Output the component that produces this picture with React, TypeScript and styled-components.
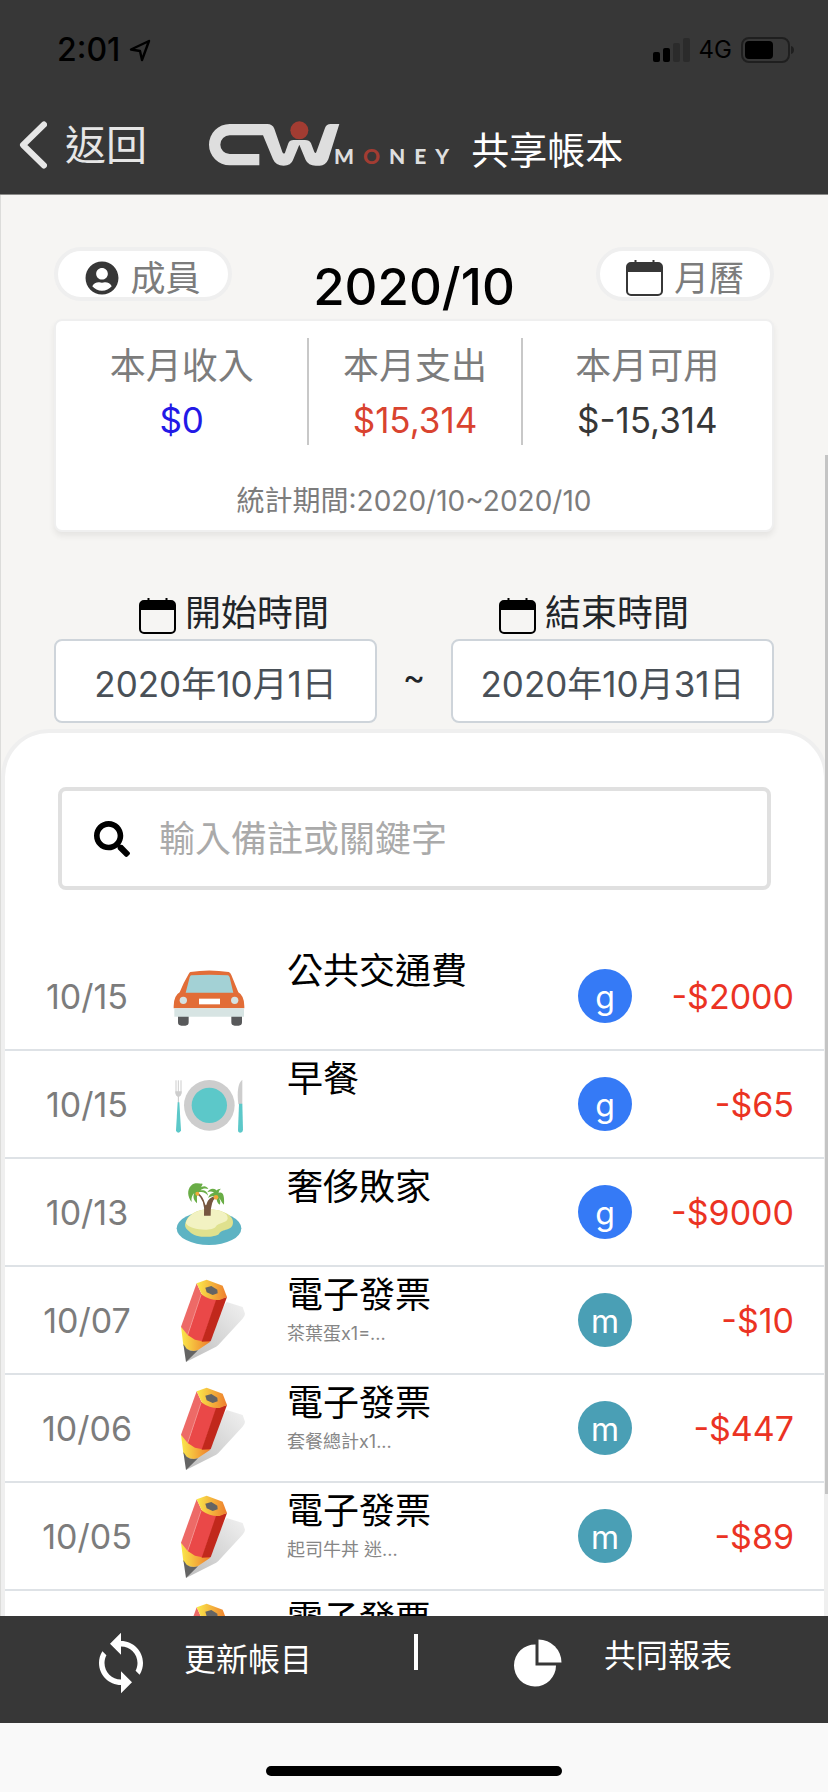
import React from "react";
import styled, { createGlobalStyle } from "styled-components";
import { FaSearch, FaUserCircle } from "react-icons/fa";
import { MdSync } from "react-icons/md";

const GlobalStyle = createGlobalStyle`
  * { box-sizing: border-box; }
  body {
    margin: 0;
    background: #f6f5f3;
    color: #212529;
    font-family: Inter, "Noto Sans CJK TC", sans-serif;
    font-size: 34px;
  }
  button, input { font: inherit; color: inherit; }
  button { border: 0; padding: 0; background: none; cursor: pointer; }
  svg { display: block; flex: none; }
`;

const Page = styled.div`
  position: relative;
  display: flex;
  flex-direction: column;
  height: 100vh;
`;

const Header = styled.header`
  flex: none;
  background: #373737;
  border-bottom: 1px solid #8a8a88;
`;

const StatusBar = styled.div`
  display: flex;
  align-items: center;
  justify-content: space-between;
  height: 92px;
  padding: 8px 33px 0 57px;
  color: #000;
`;

const StatusGroup = styled.div`
  display: flex;
  align-items: center;
  gap: 9px;
`;

const Clock = styled.span`
  font-size: 32px;
  font-weight: 500;
  line-height: 40px;
`;

const Network = styled.span`
  font-size: 24px;
  line-height: 40px;
`;

const NavBar = styled.div`
  display: flex;
  align-items: center;
  height: 102px;
  padding-left: 18px;
`;

const BackButton = styled.button`
  display: flex;
  align-items: center;
  gap: 18px;
  margin-right: 62px;
  padding-top: 3px;
  color: #e6e6e6;
  font-size: 41px;
  line-height: 48px;
`;

const Brand = styled.div`
  display: flex;
  align-items: flex-end;
  color: #dedede;
`;

const Wordmark = styled.span`
  display: flex;
  gap: 9px;
  margin-left: -6px;
  font-family: Lato, sans-serif;
  font-size: 21px;
  font-weight: 900;
  line-height: 21px;
`;

const RedLetter = styled.span`
  color: #a23c32;
`;

const NavTitle = styled.h1`
  margin: 14px 0 0 22px;
  color: #fff;
  font-size: 38px;
  font-weight: 400;
  line-height: 48px;
`;

const Content = styled.main`
  flex: 1;
  min-height: 0;
  overflow-y: auto;
  scrollbar-width: none;
  border-left: 1px solid #dcdcda;
`;

const Overview = styled.section`
  padding: 52px 54px 0 53px;
`;

const MonthRow = styled.div`
  display: flex;
  align-items: flex-start;
  justify-content: space-between;
`;

const Pill = styled.button`
  display: flex;
  align-items: center;
  justify-content: center;
  gap: 11px;
  width: 178px;
  height: 54px;
  padding-top: 8px;
  border: 4px solid #efefef;
  border-radius: 27px;
  background: #fff;
  color: #7c7c7c;
  font-size: 35px;
  line-height: 42px;

  svg { color: #373737; }
`;

const Month = styled.h2`
  margin: 8px 0 0;
  color: #000;
  font-size: 51px;
  font-weight: 500;
  line-height: 64px;
`;

const SummaryCard = styled.div`
  padding: 17px 0 11px;
  border: 2px solid #efefef;
  border-radius: 8px;
  background: #fff;
  box-shadow: 0 4px 6px rgba(0, 0, 0, 0.07);
`;

const SummaryColumns = styled.dl`
  display: grid;
  grid-template-columns: 252fr 214fr 252fr;
  margin: 0;
`;

const SummaryItem = styled.div`
  padding: 7px 0 4px;
  text-align: center;

  & + & { border-left: 2px solid #c8c8c8; }
`;

const SummaryLabel = styled.dt`
  color: #7c7c7c;
  font-size: 36px;
  line-height: 42px;
`;

const SummaryValue = styled.dd<{ $color: string }>`
  margin: 12px 0 0;
  color: ${({ $color }) => $color};
  font-size: 35px;
  line-height: 42px;
`;

const Period = styled.p`
  margin: 38px 0 0;
  color: #7c7c7c;
  font-size: 28px;
  line-height: 36px;
  text-align: center;
`;

const DateLabels = styled.div`
  display: grid;
  grid-template-columns: 1fr 1fr;
  margin: 60px 0 5px;
`;

const DateLabel = styled.label`
  display: flex;
  align-items: center;
  justify-content: center;
  gap: 9px;
  font-size: 36px;
  line-height: 42px;

  svg { margin-top: 6px; color: #000; }
`;

const DateInputs = styled.div`
  display: grid;
  grid-template-columns: 1fr 74px 1fr;
  align-items: center;
  text-align: center;
`;

const DateInput = styled.input`
  width: 100%;
  height: 84px;
  padding: 0;
  border: 2px solid #ced4da;
  border-radius: 8px;
  background: #fff;
  color: #495057;
  font-size: 35px;
  text-align: center;
`;

const Tilde = styled.span`
  padding-bottom: 10px;
`;

const Records = styled.section`
  margin-top: 6px;
  padding-top: 54px;
  border: 4px solid #efefef;
  border-bottom: 0;
  border-radius: 48px 48px 0 0;
  background: #fff;
`;

const SearchBox = styled.label`
  display: flex;
  align-items: center;
  gap: 29px;
  height: 103px;
  margin: 0 53px;
  padding: 0 32px;
  border: 4px solid #e0e0e0;
  border-radius: 8px;
  color: #000;
`;

const SearchInput = styled.input`
  flex: 1;
  min-width: 0;
  padding: 0;
  border: 0;
  outline: 0;
  background: none;
  font-size: 36px;

  &::placeholder { color: #aaa; opacity: 1; }
`;

const RecordList = styled.ul`
  margin: 53px 0 0;
  padding: 0;
  list-style: none;
`;

const Record = styled.li`
  display: grid;
  grid-template-columns: 164px 82px 1fr 54px 192px;
  align-items: center;
  height: 108px;
  border-bottom: 2px solid #dee2e6;
`;

const RecordDate = styled.time`
  color: #7c7c7c;
  text-align: center;
`;

const RecordText = styled.div`
  align-self: start;
  padding: 6px 0 0 36px;
`;

const RecordTitle = styled.div`
  color: #000;
  font-size: 36px;
  line-height: 44px;
`;

const RecordNote = styled.div`
  margin-top: 5px;
  color: #868686;
  font-size: 18px;
  line-height: 24px;
`;

const Avatar = styled.span<{ $color: string }>`
  width: 54px;
  height: 54px;
  border-radius: 50%;
  background: ${({ $color }) => $color};
  color: #fff;
  font-size: 32px;
  line-height: 58px;
  text-align: center;
`;

const Amount = styled.span`
  padding-right: 30px;
  color: #eb3323;
  text-align: right;
`;

const ScrollThumb = styled.div`
  position: absolute;
  top: 455px;
  right: 0;
  width: 3px;
  height: 58%;
  background: #c4c4c4;
`;

const Footer = styled.footer`
  display: grid;
  flex: none;
  grid-template-columns: 400fr 18px 410fr;
  align-items: start;
  height: 107px;
  padding-top: 14px;
  background: #373737;
  color: #fff;
`;

const FooterAction = styled.button<{ $gap: number }>`
  display: flex;
  align-items: center;
  justify-content: center;
  gap: ${({ $gap }) => $gap}px;
  height: 66px;
  font-size: 32px;
  line-height: 48px;
`;

const FooterLabel = styled.span<{ $lift: number }>`
  padding-bottom: ${({ $lift }) => $lift}px;
`;

const FooterDivider = styled.span`
  justify-self: end;
  width: 4px;
  height: 36px;
  margin-top: 4px;
  background: #fff;
`;

const HomeArea = styled.div`
  display: flex;
  flex: none;
  justify-content: center;
  height: 69px;
  padding-top: 43px;
  background: #f9f9f9;
`;

const HomeIndicator = styled.div`
  width: 296px;
  height: 10px;
  border-radius: 5px;
  background: #000;
`;

const LocationIcon = () => (
  <svg width="22" height="23" viewBox="0 0 22 23" fill="none" stroke="currentColor" strokeWidth="2.4" strokeLinejoin="round">
    <path d="M20 2 2 10.500l9 1.500 2 9Z" />
  </svg>
);

const SignalIcon = () => (
  <svg width="37" height="24" viewBox="0 0 37 24" fill="currentColor">
    <rect y="14" width="7" height="10" rx="2" />
    <rect x="10" y="10" width="7" height="14" rx="2" />
    <rect x="20" y="5" width="7" height="19" rx="2" fill="#2b2b2b" />
    <rect x="30" width="7" height="24" rx="2" fill="#2b2b2b" />
  </svg>
);

const BatteryIcon = () => (
  <svg width="54" height="26" viewBox="0 0 54 26">
    <rect x="1" y="1" width="47" height="24" rx="7" fill="none" stroke="#1f1f1f" strokeWidth="2" />
    <rect x="4" y="4" width="28" height="18" rx="4" fill="#000" />
    <path d="M50 9c4 1 4 7 0 8Z" fill="#1f1f1f" />
  </svg>
);

const ChevronIcon = () => (
  <svg width="29" height="48" viewBox="0 0 29 48" fill="none" stroke="currentColor" strokeWidth="6" strokeLinecap="round" strokeLinejoin="round">
    <path d="M26 3.500 5 24l21 20.500" />
  </svg>
);

const LogoMark = () => (
  <svg width="131" height="45" viewBox="30 33 393 135">
    <path
      fill="#dedede"
      d="M181 132H92A28 28 0 0 1 92 76H192L222 148Q230 167 254 167Q276 167 282 150L301 104L320 150Q328 167 350 167H362Q380 167 388 148L421 42H395Q382 42 378 54L352 126Q350 132 346 126L336 100Q331 90 318 90H284Q272 90 268 100L258 128Q254 134 250 126L226 56Q220 42 205 42H92A62 62 0 0 0 92 166H181Z"
    />
    <circle cx="301" cy="61" r="27" fill="#a23c32" />
  </svg>
);

const CalendarIcon = () => (
  <svg width="37" height="36" viewBox="0 0 37 36">
    <path d="M9.500 0v5M27.500 0v5" stroke="currentColor" strokeWidth="2" />
    <rect x="1" y="3" width="35" height="32" rx="4" fill="none" stroke="currentColor" strokeWidth="2" />
    <path d="M1 12V7a4 4 0 0 1 4-4h27a4 4 0 0 1 4 4v5Z" fill="currentColor" />
  </svg>
);

const PieIcon = () => (
  <svg width="48" height="48" viewBox="0 0 48 48" fill="currentColor">
    <path d="M21.500 5.500A21 21 0 1 0 42 26.500H21.500Z" />
    <path d="M24.500 0.500A23 23 0 0 1 47.500 23.500H24.500Z" />
  </svg>
);

const CarIcon = () => (
  <svg width="80" height="90" viewBox="507 64 240 270">
    <path d="M534 258h32v20q0 10-10 10h-12q-10 0-10-10ZM694 258h32v20q0 10-10 10h-12q-10 0-10-10Z" fill="#58595b" />
    <path d="M571 127q56-9 115 0 5 2 8 9l21 52q18 10 18 42v6H521v-6q0-32 18-42 12-30 27-55 2-5 5-6Z" fill="#e26d37" />
    <path d="M574 137q54-4 109 0 4 0 6 6l11 46H557l12-46q2-6 5-6Z" fill="#a3d1d5" />
    <circle cx="550" cy="212" r="11" fill="#d5e2e1" />
    <circle cx="704" cy="212" r="11" fill="#d5e2e1" />
    <path d="M597 207h63v17h-63Z" fill="#fff" />
    <path d="M523 236h209v25H523Z" fill="#d7e4e3" />
  </svg>
);

const MealIcon = () => (
  <svg width="80" height="90" viewBox="507 388 240 270">
    <circle cx="628" cy="527" r="76" fill="#cdcdcd" />
    <circle cx="628" cy="527" r="53" fill="#5cc8c9" />
    <path d="M528 452v38q0 8 7 10 8-2 8-10v-38M535 452v68" fill="none" stroke="#cdcdcd" strokeWidth="3" />
    <path d="M526 485h19q0 14-8 16v20h-3v-20q-8-2-8-16Z" fill="#cdcdcd" />
    <path d="M533 518h5l5 84q-2 7-8 7t-7-7Z" fill="#5cc8c9" />
    <path d="M727 450v74h-12q-7-60 12-74Z" fill="#cdcdcd" />
    <path d="M717 522h10l2 79q-1 8-8 8t-7-8Z" fill="#5cc8c9" />
  </svg>
);

const IslandIcon = () => (
  <svg width="80" height="90" viewBox="507 712 240 270">
    <ellipse cx="627" cy="896" rx="97" ry="50" fill="#5db3c3" />
    <path d="M555 885c5-30 38-47 73-46 36 1 71 16 71 38 0 30-34 18-42 36-15 12-72 13-88-7-9-7-14-12-14-21Z" fill="#dfe18e" />
    <path d="M557 880c8-27 38-41 71-41 31 0 58 12 55 28-3 14-28 10-36 24-9 15-79 11-90-11Z" fill="#f2f2c2" />
    <path d="M593 789q15 8 22 33 3 9 5 0 6-19 26-23l4 4q-19 10-18 55h-20q5-48-22-66Z" fill="#765640" />
    <path d="M596 788c-5-20 4-28 12-25-7 4-8 8-9 14 8-9 20-10 26 1-9-3-17-2-24 4 13-2 22 4 23 16-8-10-16-13-28-10-8 11-4 19-5 33-11-10-13-20-8-31-7 7-10 16-8 27-13-17-14-37-2-49 8-9 21-8 35-5Z" fill="#69ad46" />
    <path d="M649 799c-5-17 2-21 14-22-5 4-7 8-7 13 11-5 18 3 16 35-8-6-9-14-15-20 4 8 5 14 2 20-8-5-10-14-9-23-9-4-18-2-26 3 3-10 10-15 18-16-8-5-14-3-20-1 6-10 16-14 27-7Z" fill="#69ad46" />
    <circle cx="592" cy="792" r="6" fill="#f2a83b" />
    <circle cx="648" cy="803" r="7" fill="#f2a83b" />
  </svg>
);

const PencilIcon = () => (
  <svg width="80" height="90" viewBox="507 48 240 270">
    <defs>
      <linearGradient id="pencilWood">
        <stop offset="0" stopColor="#fae94b" />
        <stop offset="1" stopColor="#ee7d2d" />
      </linearGradient>
      <linearGradient id="pencilShade" x1="1" y1="0" x2="0" y2="1">
        <stop offset="0" stopColor="#f1f1f1" />
        <stop offset="1" stopColor="#bdbdbd" />
      </linearGradient>
    </defs>
    <path d="M558 309 680 129l48 15 7 20q0 8-8 16l-72 78q-6 6-14 9Z" fill="url(#pencilShade)" />
    <path d="m543 203 7 56 10 12q16 8 33 3l37-25-10-20Z" fill="url(#pencilWood)" />
    <path d="m550 255 10 14q14 10 34 5l-36 35Z" fill="#646464" />
    <path d="m590 73-47 130 20 25 43-120Z" fill="#ed6a67" />
    <path d="m604 105-41 123 22 14 22 5 44-126Z" fill="#ea4848" />
    <path d="m681 114-33 9-43 125 27-1Z" fill="#c1281c" />
    <path d="m603 108-40 120" stroke="#f6a7a5" strokeWidth="2" />
    <path d="m590 73 30-11 48 18 13 34-22 9q-28 2-53-16Z" fill="url(#pencilWood)" />
    <path d="m616 86 18-5 18 11 1 11-15 5-18-8Z" fill="#646464" />
  </svg>
);

const BLUE = "#357af6";
const TEAL = "#4a9fb5";

const summary = [
  { label: "本月收入", value: "$0", color: "#2319e6" },
  { label: "本月支出", value: "$15,314", color: "#d9432f" },
  { label: "本月可用", value: "$-15,314", color: "#373737" },
];

const records = [
  { date: "10/15", Icon: CarIcon, title: "公共交通費", note: "", member: "g", color: BLUE, amount: "-$2000" },
  { date: "10/15", Icon: MealIcon, title: "早餐", note: "", member: "g", color: BLUE, amount: "-$65" },
  { date: "10/13", Icon: IslandIcon, title: "奢侈敗家", note: "", member: "g", color: BLUE, amount: "-$9000" },
  { date: "10/07", Icon: PencilIcon, title: "電子發票", note: "茶葉蛋x1=...", member: "m", color: TEAL, amount: "-$10" },
  { date: "10/06", Icon: PencilIcon, title: "電子發票", note: "套餐總計x1...", member: "m", color: TEAL, amount: "-$447" },
  { date: "10/05", Icon: PencilIcon, title: "電子發票", note: "起司牛丼 迷...", member: "m", color: TEAL, amount: "-$89" },
];

export default function App() {
  return (
    <Page>
      <GlobalStyle />
      <Header>
        <StatusBar>
          <StatusGroup>
            <Clock>2:01</Clock>
            <LocationIcon />
          </StatusGroup>
          <StatusGroup>
            <SignalIcon />
            <Network>4G</Network>
            <BatteryIcon />
          </StatusGroup>
        </StatusBar>
        <NavBar>
          <BackButton type="button">
            <ChevronIcon />
            返回
          </BackButton>
          <Brand>
            <LogoMark />
            <Wordmark>
              <span>M</span>
              <RedLetter>O</RedLetter>
              <span>N</span>
              <span>E</span>
              <span>Y</span>
            </Wordmark>
          </Brand>
          <NavTitle>共享帳本</NavTitle>
        </NavBar>
      </Header>

      <Content>
        <Overview>
          <MonthRow>
            <Pill type="button">
              <FaUserCircle size={34} />
              成員
            </Pill>
            <Month>2020/10</Month>
            <Pill type="button">
              <CalendarIcon />
              月曆
            </Pill>
          </MonthRow>
          <SummaryCard>
            <SummaryColumns>
              {summary.map((item) => (
                <SummaryItem key={item.label}>
                  <SummaryLabel>{item.label}</SummaryLabel>
                  <SummaryValue $color={item.color}>{item.value}</SummaryValue>
                </SummaryItem>
              ))}
            </SummaryColumns>
            <Period>統計期間:2020/10~2020/10</Period>
          </SummaryCard>
          <DateLabels>
            <DateLabel htmlFor="start">
              <CalendarIcon />
              開始時間
            </DateLabel>
            <DateLabel htmlFor="end">
              <CalendarIcon />
              結束時間
            </DateLabel>
          </DateLabels>
          <DateInputs>
            <DateInput id="start" defaultValue="2020年10月1日" />
            <Tilde>~</Tilde>
            <DateInput id="end" defaultValue="2020年10月31日" />
          </DateInputs>
        </Overview>

        <Records>
          <SearchBox>
            <FaSearch size={36} />
            <SearchInput type="search" aria-label="搜尋" placeholder="輸入備註或關鍵字" />
          </SearchBox>
          <RecordList>
            {records.map(({ date, Icon, title, note, member, color, amount }, index) => (
              <Record key={index}>
                <RecordDate>{date}</RecordDate>
                <Icon />
                <RecordText>
                  <RecordTitle>{title}</RecordTitle>
                  {note && <RecordNote>{note}</RecordNote>}
                </RecordText>
                <Avatar $color={color}>{member}</Avatar>
                <Amount>{amount}</Amount>
              </Record>
            ))}
            <Record>
              <span />
              <PencilIcon />
              <RecordText>
                <RecordTitle>電子發票</RecordTitle>
              </RecordText>
            </Record>
          </RecordList>
        </Records>
      </Content>
      <ScrollThumb />

      <Footer>
        <FooterAction type="button" $gap={30}>
          <MdSync size={66} />
          <FooterLabel $lift={6}>更新帳目</FooterLabel>
        </FooterAction>
        <FooterDivider />
        <FooterAction type="button" $gap={42}>
          <PieIcon />
          <FooterLabel $lift={14}>共同報表</FooterLabel>
        </FooterAction>
      </Footer>
      <HomeArea>
        <HomeIndicator />
      </HomeArea>
    </Page>
  );
}
